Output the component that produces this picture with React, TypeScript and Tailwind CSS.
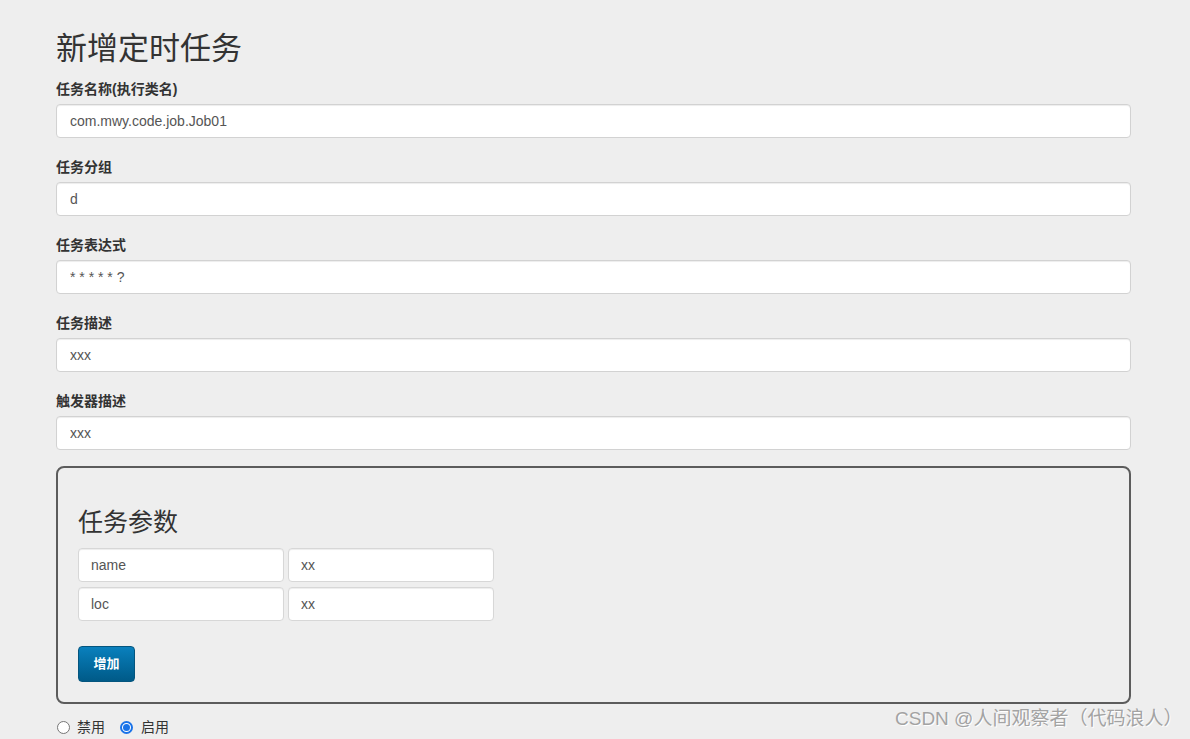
import React from "react";

const font = { fontFamily: '"Liberation Sans", Arial, "Noto Sans CJK SC", sans-serif' };

function Field({ label, value }: { label: string; value: string }) {
  return (
    <div className="mb-[19px]">
      <label className="block text-[14px] leading-[20px] font-bold text-[#333] mb-[5px]">{label}</label>
      <input
        readOnly
        value={value}
        className="block w-full h-[34px] px-[13px] text-[14px] text-[#555] bg-white border border-[#d2d2d2] rounded-[4px] shadow-[inset_0_1px_1px_rgba(0,0,0,0.075)] outline-none"
      />
    </div>
  );
}

function SmallInput({ value }: { value: string }) {
  return (
    <input
      readOnly
      value={value}
      className="block w-[206px] h-[34px] px-[12px] text-[14px] text-[#555] bg-white border border-[#d7d7d7] rounded-[4px] shadow-[inset_0_1px_1px_rgba(0,0,0,0.075)] outline-none"
    />
  );
}

export default function App() {
  return (
    <div className="relative min-h-[739px] bg-[#eeeeee] overflow-hidden" style={font}>
      <div className="pl-[56px] pr-[59px] pt-[32px]">
        <h1 className="text-[31px] leading-[34px] text-[#333] mb-[13px] font-normal">新增定时任务</h1>
        <Field label="任务名称(执行类名)" value="com.mwy.code.job.Job01" />
        <Field label="任务分组" value="d" />
        <Field label="任务表达式" value="* * * * * ?" />
        <Field label="任务描述" value="xxx" />
        <div className="-mb-[3px]">
          <Field label="触发器描述" value="xxx" />
        </div>
        <div className="border-2 border-[#5c5c5c] rounded-[8px] pt-[40px] pb-[20px] px-[20px]">
          <h2 className="text-[25px] leading-[28px] text-[#333] mb-[12px] font-normal">任务参数</h2>
          <div className="flex flex-col gap-[5px]">
            <div className="flex gap-[4px]">
              <SmallInput value="name" />
              <SmallInput value="xx" />
            </div>
            <div className="flex gap-[4px]">
              <SmallInput value="loc" />
              <SmallInput value="xx" />
            </div>
          </div>
          <button className="mt-[25px] h-[36px] w-[57px] text-[13px] font-bold text-white rounded-[4px] border border-[#04557e] bg-gradient-to-b from-[#0a80bd] to-[#005a88]">
            增加
          </button>
        </div>
        <div className="flex items-center h-[22px] mt-[12px] text-[14px] text-[#333]">
          <span className="w-[13px] h-[13px] rounded-full border border-[#767676] bg-white ml-px" />
          <span className="ml-[7px]">禁用</span>
          <span className="ml-[15px] w-[13px] h-[13px] rounded-full border-[2px] border-[#1a73e8] bg-white flex items-center justify-center">
            <span className="w-[7px] h-[7px] rounded-full bg-[#1a73e8]" />
          </span>
          <span className="ml-[8px]">启用</span>
        </div>
      </div>
      <div
        className="absolute left-[895px] top-[706px] text-[19px] leading-[26px] text-[#a3a3a3] [text-shadow:1px_1px_0_#ffffff] whitespace-nowrap"
      >
        CSDN @人间观察者（代码浪人）
      </div>
    </div>
  );
}
